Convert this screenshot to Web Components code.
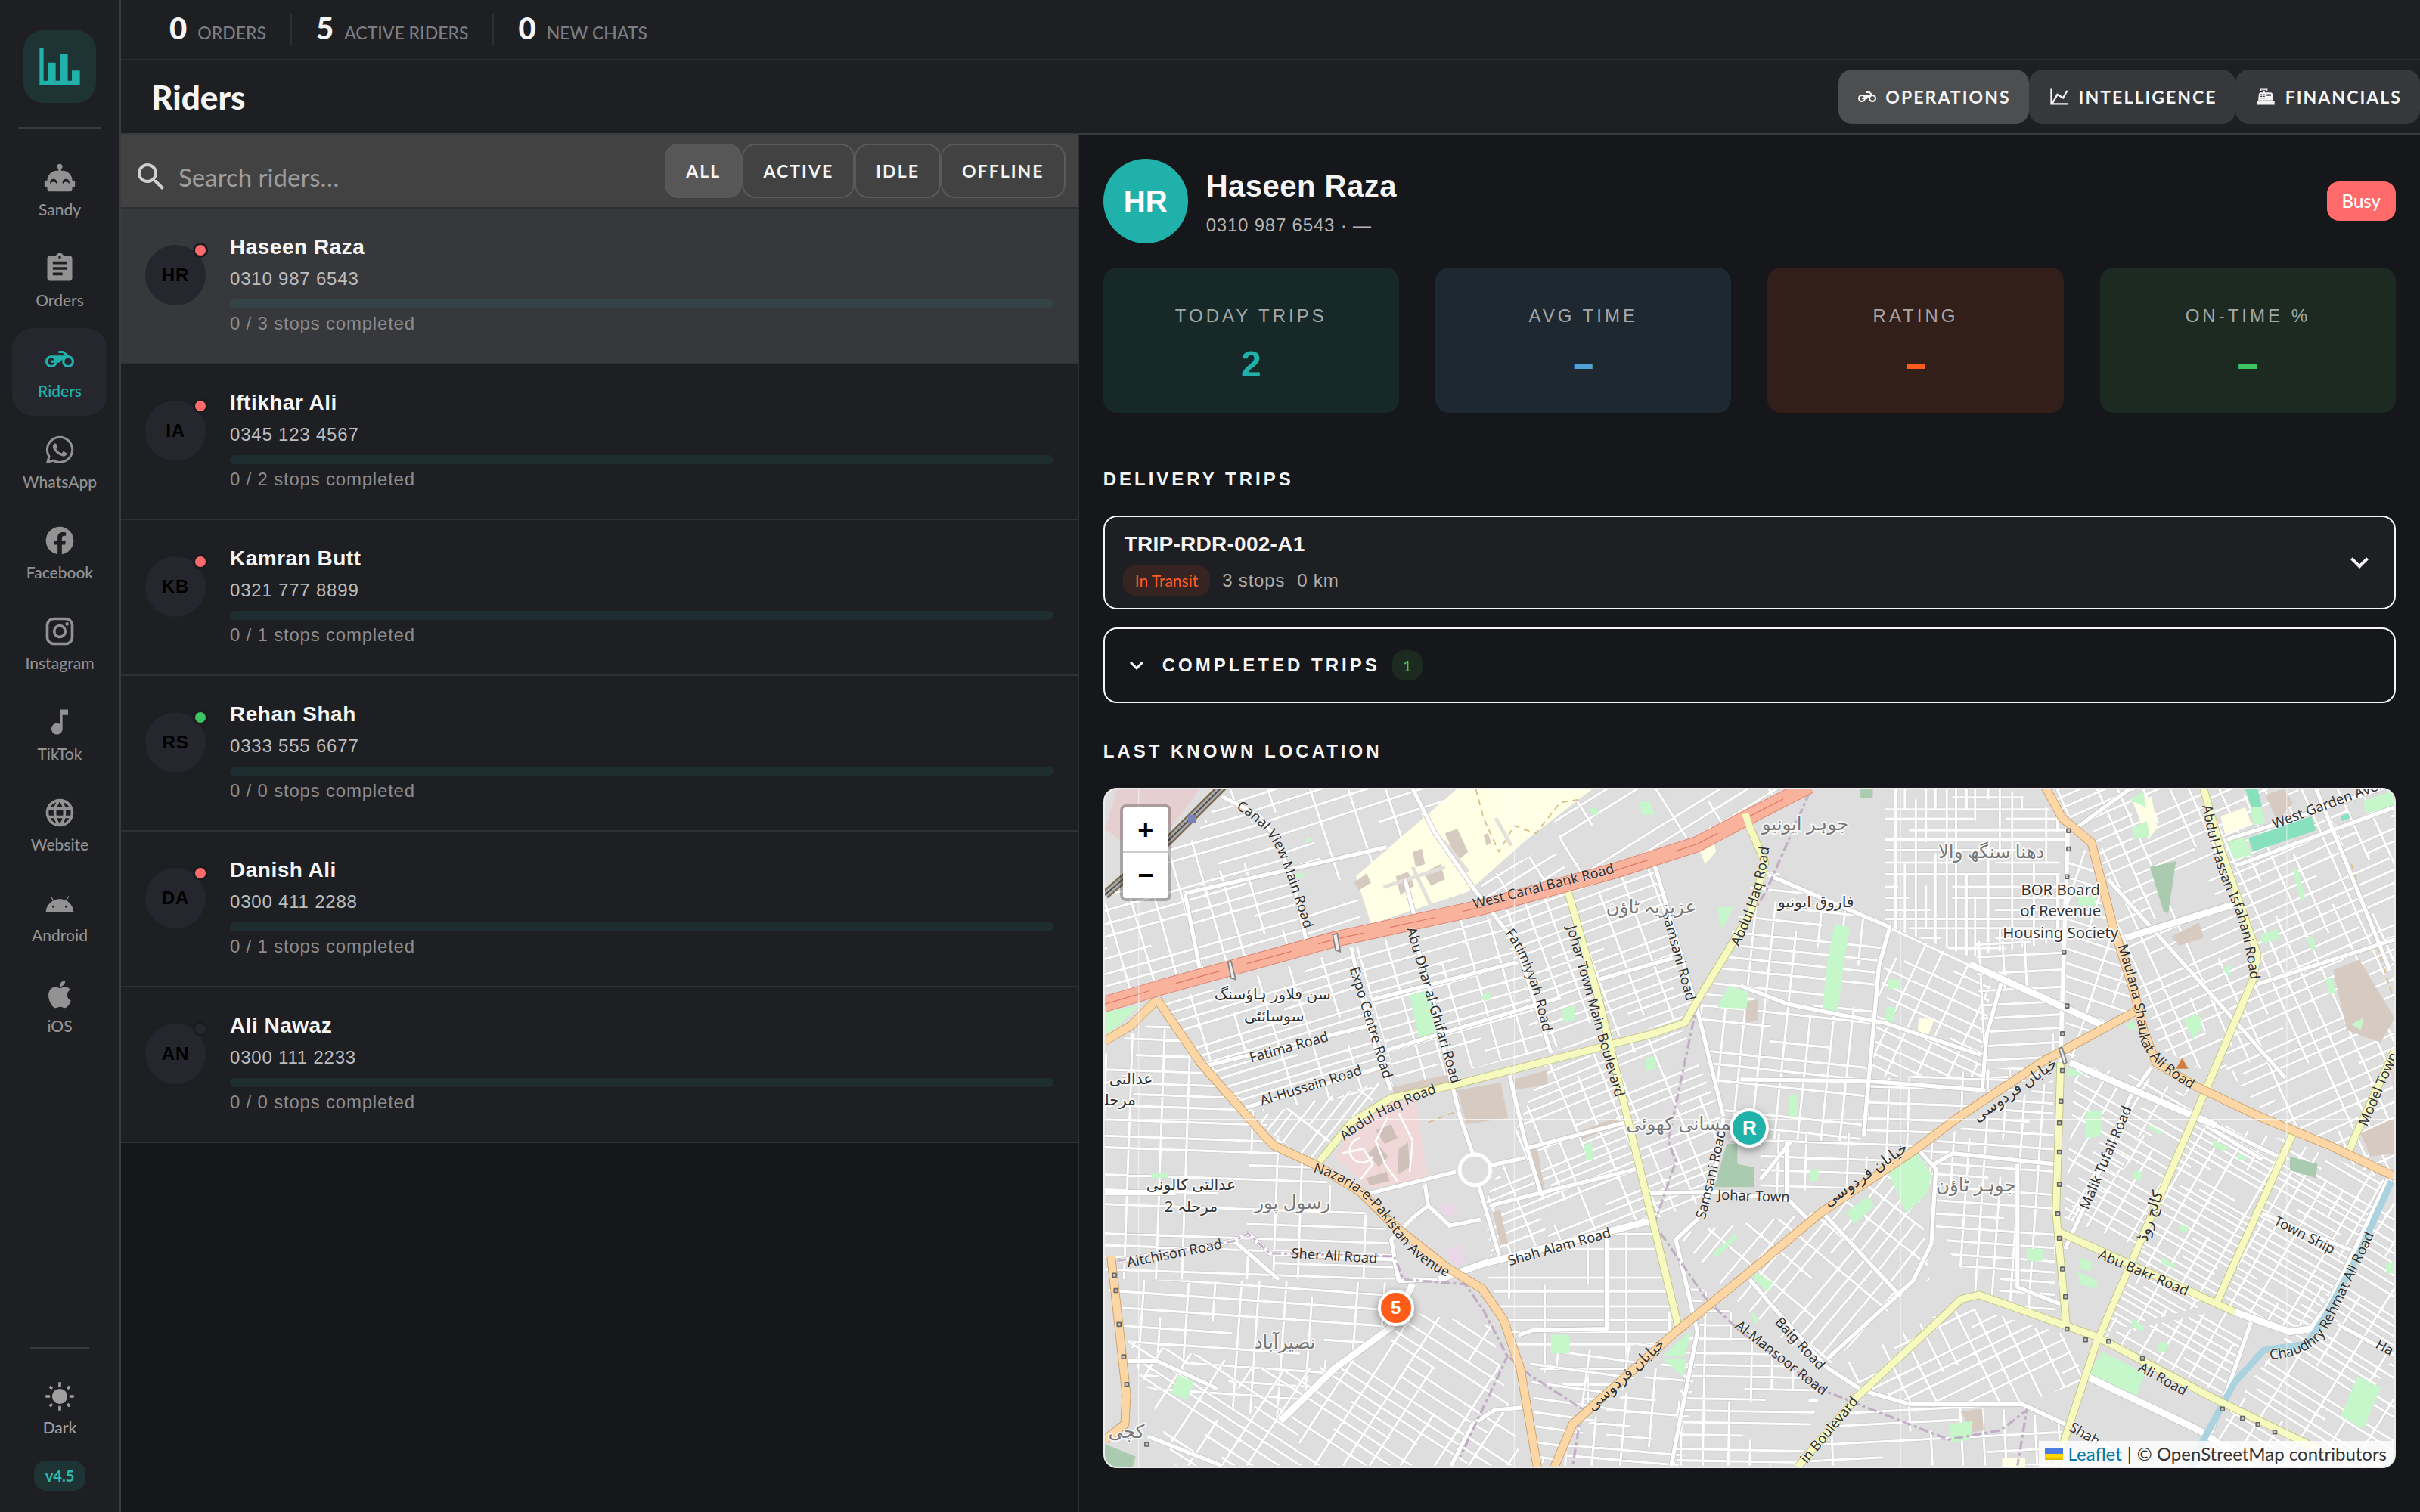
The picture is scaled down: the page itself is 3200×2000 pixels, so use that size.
<!DOCTYPE html>
<html lang="en">
<head>
<meta charset="utf-8">
<title>Riders</title>
<style>
:root{--ui:"Lato","Open Sans",sans-serif;--body:"Liberation Sans",Arial,sans-serif;--surface:#1e1f23;--ground:#16171a;--line:#35363a;--teal:#20b2aa;--text:#f5f5f5}
body{margin:0;background:var(--ground);color:var(--text);font-family:var(--body);height:100vh;overflow:hidden}
</style>
</head>
<body>
<rider-app></rider-app>
<script>
const define = (name, render, after) => customElements.define(name, class extends HTMLElement {
  connectedCallback() {
    if (this.shadowRoot) return;
    const root = this.attachShadow({ mode: 'open' });
    const t = document.createElement('template');
    t.innerHTML = '<style>*{box-sizing:border-box}button{font:inherit;color:inherit;border:0;background:none;padding:0;margin:0}</style>' + render(this);
    root.append(t.content.cloneNode(true));
    if (after) after(this);
  }
});
const at = (el, n, d = '') => el.getAttribute(n) ?? d;

const ICONS = {
  bars: 'M22,21H2V3H4V19H6V10H10V19H12V6H16V19H18V14H22V21Z',
  robot: 'M22 14H21C21 10.13 17.87 7 14 7H13V5.73C13.6 5.39 14 4.74 14 4C14 2.9 13.11 2 12 2S10 2.9 10 4C10 4.74 10.4 5.39 11 5.73V7H10C6.13 7 3 10.13 3 14H2C1.45 14 1 14.45 1 15V18C1 18.55 1.45 19 2 19H3V20C3 21.11 3.9 22 5 22H19C20.11 22 21 21.11 21 20V19H22C22.55 19 23 18.55 23 18V15C23 14.45 22.55 14 22 14M9.79 16.5C9.4 15.62 8.53 15 7.5 15S5.6 15.62 5.21 16.5C5.08 16.19 5 15.86 5 15.5C5 14.12 6.12 13 7.5 13S10 14.12 10 15.5C10 15.86 9.92 16.19 9.79 16.5M18.79 16.5C18.4 15.62 17.5 15 16.5 15S14.6 15.62 14.21 16.5C14.08 16.19 14 15.86 14 15.5C14 14.12 15.12 13 16.5 13S19 14.12 19 15.5C19 15.86 18.92 16.19 18.79 16.5Z',
  clipboard: 'M17,9H7V7H17M17,13H7V11H17M14,17H7V15H14M12,3A1,1 0 0,1 13,4A1,1 0 0,1 12,5A1,1 0 0,1 11,4A1,1 0 0,1 12,3M19,3H14.82C14.4,1.84 13.3,1 12,1C10.7,1 9.6,1.84 9.18,3H5A2,2 0 0,0 3,5V19A2,2 0 0,0 5,21H19A2,2 0 0,0 21,19V5A2,2 0 0,0 19,3Z',
  bike: 'M19.44,9.03L15.41,5H11V7H14.59L16.59,9H5C2.2,9 0,11.2 0,14C0,16.8 2.2,19 5,19C7.46,19 9.45,17.31 9.9,15H11.55L14.32,12.23C14.11,12.75 14,13.36 14,14C14,16.8 16.2,19 19,19C21.8,19 24,16.8 24,14C24,11.35 21.95,9.2 19.44,9.03M7.82,15C7.4,16.15 6.28,17 5,17C3.37,17 2,15.63 2,14C2,12.37 3.37,11 5,11C6.28,11 7.4,11.85 7.82,13H5V15H7.82M19,17C17.34,17 16,15.66 16,14C16,12.34 17.34,11 19,11C20.66,11 22,12.34 22,14C22,15.66 20.66,17 19,17Z',
  whatsapp: 'M12.04 2C6.58 2 2.13 6.45 2.13 11.91C2.13 13.66 2.59 15.36 3.45 16.86L2.05 22L7.3 20.62C8.75 21.41 10.38 21.83 12.04 21.83C17.5 21.83 21.95 17.38 21.95 11.92C21.95 9.27 20.92 6.78 19.05 4.91C17.18 3.03 14.69 2 12.04 2M12.05 3.67C14.25 3.67 16.31 4.53 17.87 6.09C19.42 7.65 20.28 9.72 20.28 11.92C20.28 16.46 16.58 20.15 12.04 20.15C10.56 20.15 9.11 19.76 7.85 19L7.55 18.83L4.43 19.65L5.26 16.61L5.06 16.29C4.24 15 3.8 13.47 3.8 11.91C3.81 7.37 7.5 3.67 12.05 3.67M8.53 7.33C8.37 7.33 8.1 7.39 7.87 7.64C7.65 7.89 7 8.5 7 9.71C7 10.93 7.89 12.1 8 12.27C8.14 12.44 9.76 14.94 12.25 16C12.84 16.27 13.3 16.42 13.66 16.53C14.25 16.72 14.79 16.69 15.22 16.63C15.7 16.56 16.68 16.03 16.89 15.45C17.1 14.87 17.1 14.38 17.04 14.27C16.97 14.17 16.81 14.11 16.56 14C16.31 13.86 15.09 13.26 14.87 13.18C14.64 13.1 14.5 13.06 14.31 13.3C14.15 13.55 13.67 14.11 13.53 14.27C13.38 14.44 13.24 14.46 13 14.34C12.74 14.21 11.94 13.95 11 13.11C10.26 12.45 9.77 11.64 9.62 11.39C9.5 11.15 9.61 11 9.73 10.89C9.84 10.78 10 10.6 10.1 10.45C10.23 10.31 10.27 10.2 10.35 10.04C10.43 9.87 10.39 9.73 10.33 9.61C10.27 9.5 9.77 8.26 9.56 7.77C9.36 7.29 9.16 7.35 9 7.34C8.86 7.34 8.7 7.33 8.53 7.33Z',
  facebook: 'M12 2.04C6.5 2.04 2 6.53 2 12.06C2 17.06 5.66 21.21 10.44 21.96V14.96H7.9V12.06H10.44V9.85C10.44 7.34 11.93 5.96 14.22 5.96C15.31 5.96 16.45 6.15 16.45 6.15V8.62H15.19C13.95 8.62 13.56 9.39 13.56 10.18V12.06H16.34L15.89 14.96H13.56V21.96A10 10 0 0 0 22 12.06C22 6.53 17.5 2.04 12 2.04Z',
  instagram: 'M7.8,2H16.2C19.4,2 22,4.6 22,7.8V16.2A5.8,5.8 0 0,1 16.2,22H7.8C4.6,22 2,19.4 2,16.2V7.8A5.8,5.8 0 0,1 7.8,2M7.6,4A3.6,3.6 0 0,0 4,7.6V16.4C4,18.39 5.61,20 7.6,20H16.4A3.6,3.6 0 0,0 20,16.4V7.6C20,5.61 18.39,4 16.4,4H7.6M17.25,5.5A1.25,1.25 0 0,1 18.5,6.75A1.25,1.25 0 0,1 17.25,8A1.25,1.25 0 0,1 16,6.75A1.25,1.25 0 0,1 17.25,5.5M12,7A5,5 0 0,1 17,12A5,5 0 0,1 12,17A5,5 0 0,1 7,12A5,5 0 0,1 12,7M12,9A3,3 0 0,0 9,12A3,3 0 0,0 12,15A3,3 0 0,0 15,12A3,3 0 0,0 12,9Z',
  note: 'M12 3V13.55C11.41 13.21 10.73 13 10 13C7.79 13 6 14.79 6 17S7.79 21 10 21 14 19.21 14 17V7H18V3H12Z',
  globe: 'M16.36,14C16.44,13.34 16.5,12.68 16.5,12C16.5,11.32 16.44,10.66 16.36,10H19.74C19.9,10.64 20,11.31 20,12C20,12.69 19.9,13.36 19.74,14M14.59,19.56C15.19,18.45 15.65,17.25 15.97,16H18.92C17.96,17.65 16.43,18.93 14.59,19.56M14.34,14H9.66C9.56,13.34 9.5,12.68 9.5,12C9.5,11.32 9.56,10.65 9.66,10H14.34C14.43,10.65 14.5,11.32 14.5,12C14.5,12.68 14.43,13.34 14.34,14M12,19.96C11.17,18.76 10.5,17.43 10.09,16H13.91C13.5,17.43 12.83,18.76 12,19.96M8,8H5.08C6.03,6.34 7.57,5.06 9.4,4.44C8.8,5.55 8.35,6.75 8,8M5.08,16H8C8.35,17.25 8.8,18.45 9.4,19.56C7.57,18.93 6.03,17.65 5.08,16M4.26,14C4.1,13.36 4,12.69 4,12C4,11.31 4.1,10.64 4.26,10H7.64C7.56,10.66 7.5,11.32 7.5,12C7.5,12.68 7.56,13.34 7.64,14M12,4.03C12.83,5.23 13.5,6.57 13.91,8H10.09C10.5,6.57 11.17,5.23 12,4.03M18.92,8H15.97C15.65,6.75 15.19,5.55 14.59,4.44C16.43,5.07 17.96,6.34 18.92,8M12,2C6.47,2 2,6.5 2,12A10,10 0 0,0 12,22A10,10 0 0,0 22,12A10,10 0 0,0 12,2Z',
  android: 'M16.61 15.15C16.15 15.15 15.77 14.78 15.77 14.32S16.15 13.5 16.61 13.5C17.07 13.5 17.45 13.86 17.45 14.32C17.45 14.78 17.07 15.15 16.61 15.15M7.41 15.15C6.95 15.15 6.57 14.78 6.57 14.32C6.57 13.86 6.95 13.5 7.41 13.5C7.87 13.5 8.24 13.86 8.24 14.32C8.24 14.78 7.87 15.15 7.41 15.15M16.91 10.14L18.58 7.26C18.67 7.09 18.61 6.88 18.45 6.79C18.28 6.69 18.07 6.75 18 6.92L16.29 9.83C14.95 9.22 13.5 8.9 12 8.91C10.47 8.91 9 9.24 7.73 9.82L6.04 6.91C5.95 6.74 5.74 6.68 5.57 6.78C5.4 6.87 5.35 7.08 5.44 7.25L7.1 10.13C4.25 11.69 2.29 14.58 2 18H22C21.72 14.59 19.77 11.7 16.91 10.14Z',
  apple: 'M18.71,19.5C17.88,20.74 17,21.95 15.66,21.97C14.32,22 13.89,21.18 12.37,21.18C10.84,21.18 10.37,21.95 9.1,22C7.79,22.05 6.8,20.68 5.96,19.47C4.25,17 2.94,12.45 4.7,9.39C5.57,7.87 7.13,6.91 8.82,6.88C10.1,6.86 11.32,7.75 12.11,7.75C12.89,7.75 14.37,6.68 15.92,6.84C16.57,6.87 18.39,7.1 19.56,8.82C19.47,8.88 17.39,10.1 17.41,12.63C17.44,15.65 20.06,16.66 20.09,16.67C20.06,16.74 19.67,18.11 18.71,19.5M13,3.5C13.73,2.67 14.94,2.04 15.94,2C16.07,3.17 15.6,4.35 14.9,5.19C14.21,6.04 13.07,6.7 11.95,6.61C11.8,5.46 12.36,4.26 13,3.5Z',
  search: 'M9.5,3A6.5,6.5 0 0,1 16,9.5C16,11.11 15.41,12.59 14.44,13.73L14.71,14H15.5L20.5,19L19,20.5L14,15.5V14.71L13.73,14.44C12.59,15.41 11.11,16 9.5,16A6.5,6.5 0 0,1 3,9.5A6.5,6.5 0 0,1 9.5,3M9.5,5C7,5 5,7 5,9.5C5,12 7,14 9.5,14C12,14 14,12 14,9.5C14,7 12,5 9.5,5Z',
  trend: 'M16,11.78L20.24,4.45L21.97,5.45L16.74,14.5L10.23,10.75L5.46,19H22V21H2V3H4V17.54L9.5,8L16,11.78Z',
  register: 'M2,17H22V21H2V17M6.25,7H9V6H6V3H14V6H11V7H17.8C18.8,7 19.8,8 20,9L20.5,16H3.5L4.2,9C4.3,8 5.25,7 6.25,7M13,9V11H18V9H13M6,9V10H8V9H6M9,9V10H11V9H9M6,11V12H8V11H6M9,11V12H11V11H9M6,13V14H8V13H6M9,13V14H11V13H9M7,4V5H13V4H7Z',
  chevron: 'M7.41,8.58L12,13.17L16.59,8.58L18,10L12,16L6,10L7.41,8.58Z',
  sun: 'M12 6.5a5.5 5.5 0 0 1 0 11a5.5 5.5 0 0 1 0 -11M11 1.8h2v3.2h-2zM11 19h2v3.2h-2zM1.8 11h3.2v2h-3.2zM19 11h3.2v2h-3.2zM5.5 4.1L7.2 5.8 5.8 7.2 4.1 5.5zM18.5 4.1L19.9 5.5 18.2 7.2 16.8 5.8zM5.8 16.8L7.2 18.2 5.5 19.9 4.1 18.5zM18.2 16.8L19.9 18.5 18.5 19.9 16.8 18.2z'
};
define('app-icon', el => `<style>:host{display:inline-block;flex:none;width:${at(el, 'size', 44)}px;height:${at(el, 'size', 44)}px}svg{display:block;width:100%;height:100%}</style>
<svg viewBox="0 0 24 24" fill="currentColor" fill-rule="evenodd" aria-hidden="true"><path d="${ICONS[at(el, 'name')]}"/></svg>`);

define('nav-item', el => `<style>
:host{display:block}
a{display:flex;flex-direction:column;align-items:center;gap:8px;height:116px;padding-top:19px;border-radius:28px;color:#929292;text-decoration:none;font:500 21px/24px var(--ui)}
.box{height:44px;display:flex;align-items:center}
:host([current]) a{background:#26272e;color:var(--teal)}
</style><a href="#${at(el, 'icon')}"><span class="box"><app-icon name="${at(el, 'icon')}" size="${at(el, 'icon') === 'bike' ? 38 : 44}"></app-icon></span><slot></slot></a>`);

define('side-nav', () => `<style>
:host{display:flex;flex-direction:column;width:160px;flex:none;background:var(--surface);border-right:2px solid #3a3b3f;padding:40px 16px 28px}
.logo{width:96px;height:96px;margin:0 auto;border-radius:26px;background:#1e3333;color:var(--teal);display:grid;place-items:center}
hr{border:0;height:2px;background:#3a3b3f;margin:32px 8px 24px;flex:none}
nav{display:flex;flex-direction:column;gap:4px}
.foot{margin-top:auto;display:flex;flex-direction:column}
.foot hr{margin:0 24px 22px}
button{display:flex;flex-direction:column;align-items:center;gap:7px;padding-top:19px;color:#a0a0a0;font:500 21px/24px var(--ui)}
.v{align-self:center;margin-top:32px;border-radius:16px;background:#1e3333;color:#2fb8b0;padding:0 15px;font:700 20px/40px var(--ui)}
</style>
<div class="logo"><app-icon name="bars" size="64"></app-icon></div><hr>
<nav><nav-item icon="robot">Sandy</nav-item><nav-item icon="clipboard">Orders</nav-item><nav-item icon="bike" current>Riders</nav-item><nav-item icon="whatsapp">WhatsApp</nav-item><nav-item icon="facebook">Facebook</nav-item><nav-item icon="instagram">Instagram</nav-item><nav-item icon="note">TikTok</nav-item><nav-item icon="globe">Website</nav-item><nav-item icon="android">Android</nav-item><nav-item icon="apple">iOS</nav-item></nav>
<div class="foot"><hr><button type="button"><app-icon name="sun"></app-icon>Dark</button><span class="v">v4.5</span></div>`);

define('count-stat', el => `<style>
:host{display:flex;align-items:baseline;gap:14px;height:40px;padding:0 32px;font:500 23px/40px var(--ui);color:#7c7d80}
:host(:not(:last-child)){border-right:2px solid #2e2f33}
b{font:900 40px/36px var(--ui);color:var(--text)}
</style><b>${at(el, 'value')}</b><slot></slot>`);

define('top-bar', () => `<style>
:host{display:block;background:var(--surface)}
.counts{display:flex;align-items:center;height:80px;padding-left:32px;border-bottom:2px solid #2e2f33}
.head{display:flex;align-items:center;justify-content:space-between;height:98px;padding-left:40px;border-bottom:2px solid #3a3b3f}
h1{margin:0;font:900 44px/56px var(--ui)}
.tabs{display:flex}
button{display:flex;align-items:center;gap:12px;height:72px;padding:0 24px 0 26px;border-radius:18px;background:#37383b;font:700 23px/32px var(--ui);letter-spacing:.0893em}
button[aria-selected=true]{background:#4d4e50}
</style>
<div class="counts"><count-stat value="0">ORDERS</count-stat><count-stat value="5">ACTIVE RIDERS</count-stat><count-stat value="0">NEW CHATS</count-stat></div>
<div class="head"><h1>Riders</h1><div class="tabs" role="tablist">
<button role="tab" aria-selected="true"><app-icon name="bike" size="24"></app-icon>OPERATIONS</button>
<button role="tab"><app-icon name="trend" size="28"></app-icon>INTELLIGENCE</button>
<button role="tab"><app-icon name="register" size="28"></app-icon>FINANCIALS</button></div></div>`);

define('search-bar', () => `<style>
:host{display:flex;align-items:center;height:98px;padding:0 16px;background:#424242;border-bottom:2px solid #2e2f33}
label{display:flex;align-items:center;gap:12px;flex:1;min-width:0;padding-top:16px;color:#cfcfcf}
input{flex:1;min-width:0;border:0;outline:0;background:none;color:#fff;padding:0;font:400 33px/48px var(--ui)}
input::placeholder{color:#9d9d9d;opacity:1}
.f{display:flex}
button{height:72px;padding:0 26px;border:2px solid #5a5a5a;border-radius:18px;font:700 23px/32px var(--ui);letter-spacing:.0893em}
button[aria-pressed=true]{background:#575757}
</style>
<label><app-icon name="search" size="48"></app-icon><input type="search" placeholder="Search riders…" aria-label="Search riders"></label>
<div class="f"><button aria-pressed="true">ALL</button><button>ACTIVE</button><button>IDLE</button><button>OFFLINE</button></div>`);

define('rider-row', el => `<style>
:host{display:flex;gap:32px;padding:30px 32px 32px;background:var(--surface);border-bottom:2px solid #303136;font:400 24px/40px var(--body);letter-spacing:.0333em}
:host([selected]){background:#37383b}
.av{position:relative;flex:none;width:80px;height:80px;margin-top:18px;border-radius:50%;background:#26272e;color:#000;text-align:center;font:700 24px/80px var(--body)}
.av i{position:absolute;top:-3px;right:-3px;width:20px;height:20px;border-radius:50%;border:3px solid #1a1b1f;background:${at(el, 'dot', '#26272e')}}
.t{flex:1;display:flex;flex-direction:column}
b{font:700 28px/42px var(--body);letter-spacing:.0178em}
.p{color:#bdbdbe;line-height:42px}
progress{appearance:none;display:block;width:100%;height:12px;margin-top:6px;border:0;border-radius:6px;overflow:hidden;background:rgba(32,178,170,.1)}
progress::-webkit-progress-bar{background:none}
progress::-webkit-progress-value{background:var(--teal)}
.s{color:#8b8b8d}
</style><span class="av">${at(el, 'initials')}<i></i></span><div class="t"><b>${at(el, 'name')}</b><span class="p">${at(el, 'phone')}</span><progress value="0" max="1" aria-label="Stops completed"></progress><span class="s">0 / ${at(el, 'stops')} stops completed</span></div>`);

define('rider-list', () => `<style>:host{display:block;flex:none;width:calc(100% * 5 / 12);border-right:2px solid #303136}</style>
<search-bar></search-bar>
<rider-row selected initials="HR" name="Haseen Raza" phone="0310 987 6543" stops="3" dot="#ff6b6b"></rider-row>
<rider-row initials="IA" name="Iftikhar Ali" phone="0345 123 4567" stops="2" dot="#ff6b6b"></rider-row>
<rider-row initials="KB" name="Kamran Butt" phone="0321 777 8899" stops="1" dot="#ff6b6b"></rider-row>
<rider-row initials="RS" name="Rehan Shah" phone="0333 555 6677" stops="0" dot="#40c463"></rider-row>
<rider-row initials="DA" name="Danish Ali" phone="0300 411 2288" stops="1" dot="#ff6b6b"></rider-row>
<rider-row initials="AN" name="Ali Nawaz" phone="0300 111 2233" stops="0"></rider-row>`);

define('stat-card', el => `<style>
:host{display:flex;flex-direction:column;align-items:center;gap:12px;flex:1;height:192px;padding-top:44px;border-radius:18px;background:${at(el, 'bg')}}
span{font:400 24px/40px var(--body);letter-spacing:.1667em;color:rgba(255,255,255,.6)}
b{font:700 48px/64px var(--body);color:${at(el, 'fg')}}
.none{font-family:Inter,var(--body);font-weight:800}
</style><span>${at(el, 'label')}</span><b${at(el, 'value') === '–' ? ' class="none"' : ''}>${at(el, 'value')}</b>`);

define('section-title', () => `<style>:host{display:block}h2{margin:0;font:700 24px/48px var(--body);letter-spacing:.1667em}</style><h2><slot></slot></h2>`);

define('trip-card', () => `<style>
:host{display:flex;align-items:center;justify-content:space-between;height:124px;padding:0 22px 0 24px;border:2px solid var(--text);border-radius:18px;background:var(--surface)}
b{display:block;font:700 28px/40px var(--body);letter-spacing:.0094em;padding-left:2px}
.m{display:flex;align-items:center;gap:16px;margin-top:8px;font:400 24px/40px var(--body);letter-spacing:.0333em;color:#adadae}
.chip{border-radius:16px;padding:0 16px;background:#352421;color:#ff5c26;font:400 21px/40px var(--ui);letter-spacing:0}
button{display:flex;padding:0}
</style><div><b>TRIP-RDR-002-A1</b><div class="m"><span class="chip">In Transit</span><span>3 stops</span><span>0 km</span></div></div>
<button type="button" aria-label="Expand trip"><app-icon name="chevron" size="48"></app-icon></button>`);

define('completed-trips', () => `<style>
:host{display:block}
button{display:flex;align-items:center;gap:16px;width:100%;height:100px;padding:0 24px;border:2px solid var(--text);border-radius:18px;text-align:left;font:700 24px/40px var(--body);letter-spacing:.1667em}
i{min-width:40px;border-radius:16px;background:#1c2a21;color:#44bf68;text-align:center;font:400 20px/40px var(--ui);letter-spacing:0}
</style><button type="button"><app-icon name="chevron" size="36"></app-icon><span>COMPLETED TRIPS</span><i>1</i></button>`);

/* Street map. Coordinates are map units; one unit is about two screen pixels. */
const poly = (fill, s) => s.split('|').map(p => `<polygon fill="${fill}" points="${p}"/>`).join('');
const LAND =
  poly('#e6cfd0', '722,511 776,511 751,544 727,547 714,537|1548,690 1552,680 1552,712') +
  poly('#f1d8d8', '863,750 880,728 897,716 916,712 920,740 924,764 886,771') +
  poly('#ffffe5', '943,511 1031,511 987,545 950,578 887,599 877,568|1439,529 1455,523 1459,534 1442,541|1243,660 1253,661 1249,671 1242,669|1382,520 1394,516 1398,536 1392,544|1098,545 1108,535 1111,552 1104,560|1297,946 1312,946 1312,952 1297,952') +
  poly('#d6cac1', '943,707 971,702 976,725 949,729|901,705 936,697 939,702 902,711|976,701 1001,694 1002,703 978,707|990,745 995,745 1000,773 996,774|966,786 971,785 976,807 971,807|1022,734 1046,725 1048,729 1024,739|1512,629 1529,622 1552,660 1543,676 1521,668|1468,515 1480,511 1486,520 1476,532|1407,607 1425,598 1428,608 1412,613|1270,916 1284,914 1285,928 1278,929|876,572 884,566 887,572 879,577|903,568 911,565 915,574 906,580|921,566 932,560 935,570 926,574|914,552 920,550 922,560 916,562|935,540 943,537 950,552 943,558|960,541 963,540 965,546 962,548|1130,650 1138,648 1138,662 1131,663|1530,735 1552,725 1552,748 1536,750') +
  poly('#d0c0ba', '890,733 900,729 904,738 896,742|885,748 891,742 898,750 892,757|905,745 911,741 912,757 904,762|884,764 897,760 899,766 886,769') +
  poly('#c6f7cb', '912,645 924,642 929,670 918,673|714,656 736,652 722,666 714,671|1011,654 1019,652 1020,661 1012,663|1065,686 1071,685 1072,693 1066,694|1112,588 1122,588 1115,603|1112,653 1119,639 1132,643 1131,654|1061,520 1068,519 1071,528 1063,528|1029,524 1034,523 1034,528 1030,528|845,542 850,544 845,546|838,566 844,566 843,569 838,569|958,646 964,643 965,648 960,649|1188,599 1198,601 1194,626 1190,657 1180,657 1183,626|1223,635 1230,635 1231,641 1223,641|1222,653 1228,653 1226,664 1221,663|1443,545 1455,543 1459,554 1448,557|1532,519 1552,512 1552,523 1533,527|1382,536 1391,532 1393,542 1382,544|1380,518 1389,513 1390,523|1458,524 1465,522 1468,533 1461,535|1415,661 1425,657 1427,666 1421,674|1465,606 1476,602 1477,608 1466,612|1507,635 1511,634 1514,643 1510,645|1346,581 1358,581 1357,587 1347,587|1158,710 1164,710 1164,724 1158,724|1352,721 1362,720 1361,737 1351,738|1339,692 1351,697 1339,698|1486,564 1489,563 1494,582 1491,584|1495,608 1499,607 1501,616 1498,616|1377,664 1382,662 1385,668 1379,667|1221,756 1241,747 1251,761 1249,773 1235,787|1196,786 1210,776 1214,782 1201,794|1025,743 1030,741 1032,752 1027,753|1004,866 1016,866 1016,878 1004,878|1095,863 1091,880 1076,880|1077,882 1092,881 1090,893|762,892 772,897 767,908 757,904|1362,877 1390,891 1384,906 1353,892|1528,893 1543,900 1532,927 1517,919|1313,810 1324,810 1324,818 1313,818|1348,816 1356,819 1354,825 1347,822|1346,825 1359,831 1358,836 1348,833|1263,924 1278,922 1276,934 1264,936|1383,759 1388,760 1387,766 1382,764|1413,794 1418,796 1417,800 1412,798|1381,855 1390,861 1388,864 1381,860|1399,870 1405,872 1403,878 1398,876|1400,815 1410,821 1408,823 1400,819|1434,739 1444,744 1442,747 1434,744|1136,825 1148,832 1144,838 1135,829|1172,759 1178,758 1177,766 1172,766|1134,851 1139,856 1136,859|1546,820 1552,818 1552,826 1547,826|1392,729 1401,734 1399,736 1393,732|1109,813 1124,800 1125,803 1111,816|1450,748 1456,750 1455,753 1450,752|744,761 755,761 755,764 744,764|1524,664 1532,660 1530,668|1440,628 1446,625 1444,633') +
  poly('#87e0be', '1457,543 1498,529 1501,538 1460,552|1455,511 1463,511 1466,523 1459,523|1517,529 1522,527 1523,530 1518,532') +
  poly('#aacbb0', '1393,562 1410,558 1405,592 1402,591|1118,742 1125,742 1125,755 1136,757 1136,770 1110,770|714,937 734,945 732,952 714,952|1484,750 1502,755 1501,764 1484,759|1205,511 1213,511 1213,517 1205,517') +
  poly('#ead6e6', '931,782 943,781 943,786 935,789|935,812 944,806 948,818 942,822');

/* Residential blocks: outline, street bearing in degrees, row gap, cross-street gap. */
const BLOCKS = [
  ['714,585 740,550 770,545 790,516 826,545 845,611 760,636 714,650', -16, 8, 14],
  ['790,511 943,511 877,568 880,595 845,608 826,545', -18, 11, 22],
  ['1000,511 1160,511 1127,530 1040,563 955,586 960,570 1010,545', -32, 9, 20],
  ['750,650 875,615 905,705 810,722 776,690', -17, 6, 20],
  ['876,614 960,592 981,611 1004,680 905,705', -16, 8, 16],
  ['968,592 1070,562 1098,652 1085,663 1004,682', -20, 7, 17],
  ['714,680 750,660 790,700 850,760 900,800 905,830 714,830', 2, 9, 19],
  ['810,725 900,700 868,735 850,752 835,745', -52, 6, 18],
  ['714,830 905,832 895,865 828,922 740,900 725,860', 4, 10, 15],
  ['730,870 830,890 870,885 905,850 965,860 985,951 760,951', 33, 8, 17],
  ['1000,690 1090,668 1118,730 1100,780 1068,792 1000,815 965,815 960,782', -22, 6, 14],
  ['960,822 1070,793 1086,860 1035,915 985,880', 0, 9, 24],
  ['990,880 1080,870 1010,945 996,950', 8, 10, 20],
  ['1020,930 1100,865 1090,951 1010,951', 5, 8, 15],
  ['1095,830 1180,900 1165,951 1085,951', 1, 8, 14],
  ['1100,655 1140,560 1222,602 1205,740 1120,740', 6, 9, 13],
  ['1221,511 1300,511 1340,530 1336,610 1276,620 1221,600', 0, 7, 7],
  ['1225,600 1290,632 1284,700 1208,698', 25, 8, 16],
  ['1280,610 1338,610 1336,690 1290,715 1284,690', -3, 10, 15],
  ['1340,530 1366,580 1385,650 1338,690', 18, 9, 15],
  ['1325,511 1430,511 1462,630 1440,700 1400,680 1372,600 1350,540', -24, 8, 14],
  ['1430,511 1552,511 1552,770 1470,725 1440,690 1464,620', -24, 8, 12],
  ['1210,700 1330,690 1240,745 1200,770 1140,775 1140,735 1205,735', 2, 9, 15],
  ['1245,745 1330,700 1332,860 1280,838 1255,800', 4, 8, 12],
  ['1085,800 1180,786 1232,842 1180,890 1120,840', -50, 9, 16],
  ['1180,785 1240,750 1250,830 1232,840', -52, 9, 17],
  ['1185,890 1268,846 1336,865 1352,895 1310,911 1236,911', -26, 9, 13],
  ['1170,951 1205,908 1310,915 1338,925 1330,951', -3, 10, 17],
  ['1337,790 1400,700 1420,720 1390,810', 30, 7, 13],
  ['1420,725 1485,740 1436,845 1362,865 1390,800', 30, 5, 12],
  ['1485,740 1548,766 1510,850 1486,863 1440,845', 30, 5, 11],
  ['1362,866 1440,850 1458,858 1440,905', 30, 6, 12],
  ['1515,830 1552,770 1552,951 1440,951 1432,935 1470,880', 32, 6, 16],
  ['1345,690 1420,705 1350,790 1337,790', 30, 7, 13]
];
let seed = 7;
const rnd = () => (seed = (seed * 16807) % 2147483647) / 2147483647;
const blocks = () => BLOCKS.map(([pts, a, g, c], i) => {
  const p = pts.split(' ').map(s => s.split(',').map(Number));
  const cx = p.reduce((s, q) => s + q[0], 0) / p.length, cy = p.reduce((s, q) => s + q[1], 0) / p.length;
  const R = Math.max(...p.map(q => Math.hypot(q[0] - cx, q[1] - cy)));
  let d = '';
  for (let y = -R; y < R; y += g * (.8 + rnd() * .4)) {
    let x = -R;
    while (x < R) {
      const len = c * (2 + Math.floor(rnd() * 4));
      if (rnd() > .16) d += `M${x.toFixed(1)} ${y.toFixed(1)}h${len}`;
      x += len;
    }
  }
  for (let x = -R; x < R; x += c * (.75 + rnd() * .5)) {
    let y = -R;
    while (y < R) {
      const len = g * (3 + Math.floor(rnd() * 5));
      if (rnd() > .22) d += `M${x.toFixed(1)} ${y.toFixed(1)}v${len}`;
      y += len;
    }
  }
  return `<clipPath id="b${i}"><polygon points="${pts}"/></clipPath><g clip-path="url(#b${i})"><g transform="translate(${cx.toFixed(1)} ${cy.toFixed(1)}) rotate(${a})"><path d="${d}" stroke="#cacaca" stroke-width="2"/><path d="${d}" stroke="#fff" stroke-width="1.5"/></g></g>`;
}).join('');

const road = (pts, w, c, edge) => `<polyline points="${pts}" stroke="${edge}" stroke-width="${w + .8}"/><polyline points="${pts}" stroke="${c}" stroke-width="${w}"/>`;
const roads = (w, c, edge, s) => {
  const l = s.split('|');
  return l.map(p => `<polyline points="${p}" stroke="${edge}" stroke-width="${w + .8}"/>`).join('') + l.map(p => `<polyline points="${p}" stroke="${c}" stroke-width="${w}"/>`).join('');
};
const WHITE = '790,516 815,529 827,546 838,578 845,611|766,579 897,549|766,579 771,604 776,630|914,511 928,539 953,575 967,593 981,611 1004,683|909,570 915,593|874,614 886,668 900,707|914,603 928,652 939,701 945,725 953,748|957,769 971,817|977,697 987,740 998,776|1071,560 1099,655 1116,724|888,648 981,624|1035,635 1083,621|897,681 1009,647|780,691 886,665|803,719 894,692|1127,639 1158,651 1192,658 1220,663 1283,684|1145,567 1224,601 1217,626 1207,737|1127,700 1209,701 1248,704 1286,707|1297,635 1287,671 1284,707|1276,625 1363,665|1341,689 1436,730 1476,750|1346,536 1380,511|1377,608 1448,586|1443,544 1475,534 1552,508|1449,561 1552,523|1463,638 1552,609|1501,511 1549,629|1366,570 1442,655 1481,699|1394,692 1380,712 1349,786 1338,810|886,774 942,760|964,756 987,751|964,782 1060,758|987,745 1052,728|1068,774 1111,773 1158,778 1170,790|1116,725 1110,765 1099,791 1085,804 1099,864 1082,951|722,818 798,805 807,800 821,813 902,817 905,831 930,830|798,805 827,830|905,831 900,804 914,790 924,782 922,768|924,782 938,795 958,791|983,866 992,863 1040,862 1040,800|939,951 953,924 967,915 987,913|728,883 748,883 787,901|742,932 790,951|1242,745 1254,758 1251,807 1239,831 1183,882|1251,756 1265,748 1331,755|1180,786 1231,841|1133,830 1144,843 1183,887 1206,902 1237,911 1310,911 1338,924 1368,940|1307,755 1307,835 1335,846|1459,857 1445,897 1431,934|1466,787 1526,812|1515,859 1552,879|1428,729 1466,752|714,774 760,774|1140,765 1160,740|1157,740 1157,775';
const MAJOR = '931,830 959,820 1068,792|914,833 900,861 863,888 828,922|1352,893 1425,928 1460,951|1448,851 1484,864 1498,862 1510,846 1549,764|1276,625 1363,665|1377,608 1448,586|1341,689 1436,730';

const LABELS = [
  ['Canal View Main Road', 'M799 524Q820 535 828 556T844 604', 9],
  ['Expo Centre Road', 'M873 628L897 706', 9],
  ['Abu Dhar al-Ghifari Road', 'M910 602L942 712', 9],
  ['Fatimiyyah Road', 'M974 605Q990 625 1000 676', 9],
  ['Johar Town Main Boulevard', 'M1014 601L1048 720', 9],
  ['Samsani Road', 'M1076 592L1095 660', 9],
  ['Abdul Haq Road', 'M1126 614Q1143 580 1146 545', 9],
  ['West Canal Bank Road', 'M954 589L1060 562', 9],
  ['Fatima Road', 'M809 689L870 672', 9],
  ['Al-Hussain Road', 'M816 717L890 694', 9],
  ['Abdul Haq Road', 'M870 740Q890 722 940 705', 9],
  ['Nazaria-e-Pakistan Avenue', 'M849 760Q880 768 898 795T945 832', 9],
  ['Aitchison Road', 'M729 822L800 808', 9],
  ['Sher Ali Road', 'M835 816L900 820', 9],
  ['Shah Alam Road', 'M977 821L1055 799', 9],
  ['Samsani Road', 'M1104 791Q1112 760 1120 722', 9],
  ['Johar Town', 'M1112 778L1170 780', 9],
  ['West Garden Ave.', 'M1474 537L1552 508', 9],
  ['Abdul Hassan Isfahani Road', 'M1427 522Q1434 560 1444 580T1459 640', 9],
  ['Maulana Shaukat Ali Road', 'M1372 613Q1384 650 1386 670T1430 712', 9],
  ['Model Town', 'M1534 731L1556 680', 9],
  ['Malik Tufail Road', 'M1353 785L1386 708', 9],
  ['Abu Bakr Road', 'M1359 816L1422 843', 9],
  ['Town Ship', 'M1473 794L1520 818', 9],
  ['Chaudhry Rehmat Ali Road', 'M1471 882Q1500 880 1510 860T1544 790', 9],
  ['Ali Road', 'M1385 889L1430 914', 9],
  ['Baig Road', 'M1149 858L1188 900', 9],
  ['Al-Mansoor Road', 'M1123 861L1190 913', 9],
  ['in Boulevard', 'M1170 950L1215 896', 9],
  ['Shah', 'M1340 928L1400 962', 9],
  ['Ha', 'M1539 874L1590 902', 9],
  ['خیابان فردوسی', 'M1281 728L1335 690', 10],
  ['خیابان فردوسی', 'M1184 783L1236 746', 10],
  ['خیابان فردوسی', 'M1031 916L1078 873', 10],
  ['کالج روڈ', 'M1391 806L1405 764', 10]
];
const PLACES = [
  ['عزیزیہ ٹاؤن', 1069, 592, 12, 1], ['سن فلاور ہاؤسنگ', 823, 648, 10], ['سوسائٹی', 824, 662, 10],
  ['عدالتی', 731, 703, 10], ['مرحلہ', 721, 717, 10], ['جوہر ایونیو', 1169, 538, 12, 1], ['دھنا سنگھ والا', 1290, 556, 12, 1],
  ['فاروق ایونیو', 1176, 588, 10], ['BOR Board', 1335, 580, 10], ['of Revenue', 1335, 594, 10], ['Housing Society', 1335, 608, 10],
  ['سمسانی کھوئی', 1092, 733, 12, 1], ['عدالتی کالونی', 770, 772, 10], ['مرحلہ 2', 770, 786, 10], ['رسول پور', 836, 784, 12, 1],
  ['نصیرآباد', 831, 875, 12, 1], ['کچی', 728, 933, 12, 1], ['جوہر ٹاؤن', 1280, 773, 12, 1]
];
const METRO = '1340,538 1340,550 1339,568 1337,617 1339,652 1336,670 1336,694 1335,714 1334,728 1334,747 1334,768 1333,787 1334,803 1336,823 1338,841 1339,862 1351,869 1366,870 1388,881 1440,914 1453,920 1463,924 1474,929 720,827 721,837 723,859 726,880 728,898 741,937';

define('street-map', () => `<style>
:host{display:block;position:relative;height:900px;border:2px solid #ececec;border-radius:18px;overflow:hidden;background:#dedede;isolation:isolate}
svg.m{display:block;width:100%;height:100%}
text{font-family:"Noto Sans","DejaVu Sans",sans-serif;fill:#333;stroke:#fff;stroke-opacity:.75;stroke-width:2;paint-order:stroke;stroke-linejoin:round}
.road{stroke-opacity:.35;stroke-width:1}
.soft{fill:#777}
.zoom{position:absolute;left:20px;top:20px;border:4px solid rgba(0,0,0,.25);border-radius:8px;background-clip:padding-box;display:flex;flex-direction:column}
.zoom button{width:60px;height:60px;background:#fff;color:#000;font:700 36px/60px var(--body)}
.zoom button:first-child{border-bottom:2px solid #ccc;border-radius:4px 4px 0 0}
.zoom button:last-child{border-radius:0 0 4px 4px}
.pin{position:absolute;border:4px solid #fff;border-radius:50%;color:#fff;box-shadow:0 4px 12px rgba(0,0,0,.4);transform:translate(-50%,-50%);text-align:center;font:700 24px/1 var(--body)}
.r{left:50%;top:50%;width:52px;height:52px;background:var(--teal);font-size:26px}
.s{left:385px;top:686px;width:48px;height:48px;background:#ff5c1a}
.attr{position:absolute;right:0;bottom:0;display:flex;align-items:center;gap:7px;padding:0 10px 0 8px;background:rgba(255,255,255,.8);color:#333;font:400 24px/34px var(--ui)}
.attr a{display:flex;align-items:center;gap:7px;color:#0078a8;text-decoration:none}
.attr svg{width:24px;height:16px}
</style>
<svg class="m" viewBox="714 511 838 441" preserveAspectRatio="xMidYMid slice" fill="none" stroke-linejoin="round" role="img" aria-label="Street map of Johar Town">
<defs>${LABELS.map((l, i) => `<path id="l${i}" d="${l[1]}"/>`).join('')}</defs>
${blocks()}${LAND}
<g stroke="#e3e0dc" stroke-width="2.4"><path d="M914 562L932 600M895 575L935 562M934 545L950 565M968 530L978 548"/></g>
<g stroke="#fff" stroke-width="1.2"><path d="M868 748L882 745 888 755 880 765M898 724L890 740 896 755 904 766M880 738a8 8 0 1 0 8 12M905 722L914 740 912 760"/></g>
<g stroke="#d9bf8c" stroke-width=".9" stroke-dasharray="4 3"><path d="M955 511L960 530 970 552 980 535 994 540 1010 520 1022 518M1524 560L1552 650M924 728L942 721"/></g>
${roads(2.6, '#fff', '#c4c4c4', WHITE)}
<path d="M1340 530L1336 652 1334 727" stroke="#fff" stroke-width="2.6"/>
${roads(4.4, '#fff', '#c4c4c4', MAJOR)}
<circle cx="954.5" cy="758.7" r="10" fill="#dedede" stroke="#fff" stroke-width="2.4"/>
<g stroke="#b79dbb" stroke-width="1.6" stroke-dasharray="6 2 2 2" opacity=".75"><path d="M1172 513L1144 577 1099 650 1080 740 1085 753 1071 794 1105 843 1127 864 1183 903 1262 934 1296 928 1313 915 1307 951M722 818L798 805 807 800 821 813 902 815 908 830 948 833 960 850 975 879 990 892 1024 914 1018 951M976 879L945 945"/></g>
<polyline points="1550,766 1529,813 1507,854 1495,872 1467,876 1448,897 1428,934 1420,952" stroke="#aad3df" stroke-width="4.4"/>
${roads(4.4, '#f7fabf', '#bdc07c', '1015,578 1035,648 1056,735 1087,862|1130,529 1143,559 1133,593 1097,652 1091,663 1071,670 939,704 900,712 874,728 852,755|1428,511 1439,550 1463,619 1460,635 1422,724 1358,872 1332,951|1486,735 1436,846|1334,799 1448,851|1335,689 1334,725 1332,786 1339,862|1552,681 1526,738 1522,748|1164,952 1203,906 1262,851 1270,843 1282,840 1358,867 1436,908 1512,945')}
${roads(5, '#fcd6a4', '#c69b62', '748,648 776,689 818,737 824,743 852,756 880,773 902,795 936,822 959,836 973,856 984,888 995,952|748,648 731,665 714,675|718,815 723,859 728,905 727,924 714,934|1006,952 1018,924 1085,864 1127,830 1180,786 1240,746 1268,725 1324,688 1383,656|1324,508 1336,530 1355,546 1369,600 1383,644 1389,668 1397,689 1422,704 1464,724 1510,743 1552,763')}
${road('714,651 751,640 863,609 959,588 1043,565 1099,547 1127,532 1172,509', 9.5, '#f9b29c', '#dc7a66')}
<polyline points="714,651 751,640 863,609 959,588 1043,565 1099,547 1127,532 1172,509" stroke="#dc7a66" stroke-width=".6" stroke-dasharray="30 18"/>
<path d="M1130 527l4 12" stroke="#f7fabf" stroke-width="4.4"/>
<path d="M791 509L756 544 714 580" stroke="#7c6a50" stroke-width="6"/><path d="M791 509L756 544 714 580" stroke="#aaa" stroke-width="3.6"/><path d="M791 509L756 544 714 580" stroke="#444" stroke-width=".8"/>
<rect x="768" y="528" width="5" height="5" fill="#7a82b5"/>
<g fill="#eee" stroke="#888" stroke-width=".9"><path d="M865 605l2 12-3-1-2-10zM796 623l3 12-3-1-2-10zM1336 679l3 10-2 1-3-10z"/></g>
<path d="M1414 686l4 7h-8z" fill="#d08040"/>
<g fill="#c8c8c8" stroke="#666" stroke-width=".8">${METRO.split(' ').map(p => { const [x, y] = p.split(','); return `<rect x="${x - 1}" y="${y - 1}" width="2.4" height="2.4"/>`; }).join('')}</g>
<path d="M736 511V952M980 511V952M1231 511V952M1482 511V952M714 725.8H1552" stroke="#fff" stroke-width=".5" opacity=".7"/>
${LABELS.map((l, i) => `<text class="road" font-size="${l[2]}"><textPath href="#l${i}">${l[0]}</textPath></text>`).join('')}
${PLACES.map(([t, x, y, s, soft]) => `<text x="${x}" y="${y}" font-size="${s}" text-anchor="middle"${soft ? ' class="soft"' : ''}>${t}</text>`).join('')}
</svg>
<div class="zoom"><button type="button" aria-label="Zoom in">+</button><button type="button" aria-label="Zoom out">−</button></div>
<button class="pin r" type="button">R</button><button class="pin s" type="button">5</button>
<div class="attr"><a href="#leaflet"><svg viewBox="0 0 12 8"><path fill="#4C7BE1" d="M0 0h12v4H0z"/><path fill="#FFD500" d="M0 4h12v3H0z"/><path fill="#E0BC00" d="M0 7h12v1H0z"/></svg>Leaflet</a><span>|</span><span>© OpenStreetMap contributors</span></div>`);

define('rider-detail', () => `<style>
:host{display:flex;flex-direction:column;flex:1;min-width:0;padding:32px}
header{display:flex;align-items:center;gap:24px;height:112px}
.av{width:112px;height:112px;border-radius:50%;background:var(--teal);color:#fff;text-align:center;font:700 40px/112px var(--body)}
.n{flex:1}
h3{margin:0;font:700 40px/64px var(--body);letter-spacing:.0125em}
p{margin:0;font:400 24px/40px var(--body);letter-spacing:.0333em;color:#b4b4b5}
.busy{border-radius:16px;background:#ff6b6b;color:#fff;padding:0 20px;font:500 24px/52px var(--ui)}
.stats{display:flex;gap:48px;margin:32px 0 64px}
section-title{margin-bottom:24px}
completed-trips{margin:24px 0 40px}
</style>
<header><span class="av">HR</span><div class="n"><h3>Haseen Raza</h3><p>0310 987 6543 · —</p></div><span class="busy">Busy</span></header>
<div class="stats"><stat-card label="TODAY TRIPS" value="2" fg="#20b2aa" bg="#172829"></stat-card><stat-card label="AVG TIME" value="–" fg="#4fa3d8" bg="#1e2830"></stat-card><stat-card label="RATING" value="–" fg="#ff5a1f" bg="#321f1a"></stat-card><stat-card label="ON-TIME %" value="–" fg="#40c463" bg="#1c2a21"></stat-card></div>
<section-title>DELIVERY TRIPS</section-title>
<trip-card></trip-card>
<completed-trips></completed-trips>
<section-title>LAST KNOWN LOCATION</section-title>
<street-map></street-map>`);

define('rider-app', () => `<style>
:host{display:flex;height:100vh}
main{flex:1;min-width:0;display:flex;flex-direction:column}
.cols{display:flex;flex:1;min-height:0}
</style><side-nav></side-nav><main><top-bar></top-bar><div class="cols"><rider-list></rider-list><rider-detail></rider-detail></div></main>`);
</script>
</body>
</html>
